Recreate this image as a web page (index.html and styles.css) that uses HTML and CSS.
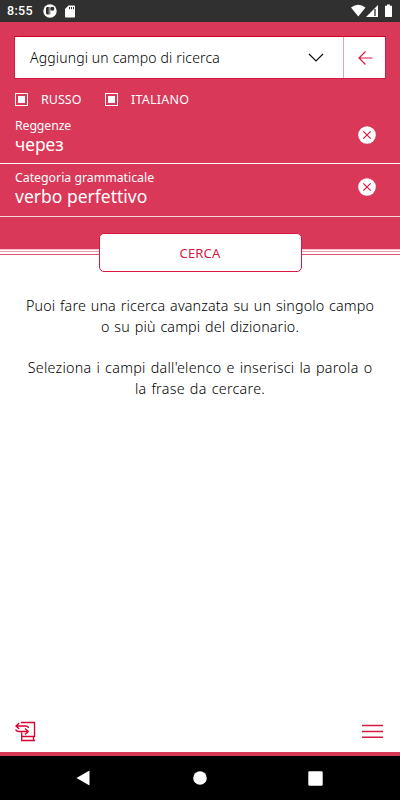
FILE: index.html
```html
<!DOCTYPE html>
<html lang="it">
<head>
<meta charset="utf-8">
<title>Ricerca avanzata</title>
<link rel="stylesheet" href="styles.css">
</head>
<body>
<div class="screen">
  <div class="status">
    <span class="clock">8:55</span>
    <svg class="app-dot" width="14" height="14" viewBox="0 0 14 14"><circle cx="7" cy="7" r="6.700" fill="#fff"/><path d="M3.900 3h1.900v7.500H4.500a1.500 1.500 0 0 1-1.500-1.500V4z" fill="#303030"/><path d="M6.800 3v7.500" stroke="#303030" stroke-width=".8"/><circle cx="9.300" cy="4.800" r="2" fill="#303030"/></svg>
    <svg class="sd" width="10" height="13" viewBox="0 0 10 13"><path d="M3.500.5H9a1 1 0 0 1 1 1v10a1 1 0 0 1-1 1H1a1 1 0 0 1-1-1V4z" fill="#fff"/><path d="M4.500 2v2.200M6.500 2v2.200M8.500 2v2.200" stroke="#303030"/></svg>
    <svg class="signals" width="43" height="14" viewBox="0 0 43 14"><path d="M0 3.500Q7-2 14.500 3.500L7.300 12.500z" fill="#fff"/><path d="M15 13L27 1v12z" fill="#fff"/><path d="M24 5v7" stroke="#303030" stroke-width="1.300"/><path d="M34 1.700h2V.5h3v1.200h2v10.800a.5.5 0 0 1-.5.5h-6a.5.5 0 0 1-.5-.5z" fill="#fff"/></svg>
  </div>
  <header class="search">
    <div class="picker">
      <div class="select"><span class="t-select">Aggiungi un campo di ricerca</span>
        <svg width="16" height="10" viewBox="0 0 16 10"><path d="M1 1l7 7 7-7" fill="none" stroke="#111" stroke-width="1.200"/></svg>
      </div>
      <div class="back"><svg width="15" height="14" viewBox="0 0 15 14"><path d="M14.500 7H1M7.500.5L1 7l6.500 6.500" fill="none" stroke="#d51b43" stroke-width="1.200"/></svg></div>
    </div>
    <div class="langs">
      <label><i class="box"></i><span class="t-ru">RUSSO</span></label>
      <label><i class="box"></i><span class="t-it">ITALIANO</span></label>
    </div>
    <div class="field first">
      <div><div class="name t-reg">Reggenze</div><div class="value t-che">через</div></div>
      <svg width="18" height="18" viewBox="0 0 18 18"><circle cx="9" cy="9" r="8.800" fill="#fff"/><path d="M5.300 5.300l7.400 7.400M12.700 5.300l-7.400 7.400" stroke="#d51b43" stroke-width="1.200"/></svg>
    </div>
    <div class="field second">
      <div><div class="name t-cat">Categoria grammaticale</div><div class="value t-ver">verbo perfettivo</div></div>
      <svg width="18" height="18" viewBox="0 0 18 18"><circle cx="9" cy="9" r="8.800" fill="#fff"/><path d="M5.300 5.300l7.400 7.400M12.700 5.300l-7.400 7.400" stroke="#d51b43" stroke-width="1.200"/></svg>
    </div>
  </header>
  <div class="lines"></div>
  <button class="go"><span class="t-go">CERCA</span></button>
  <main>
    <p><span class="l1">Puoi fare una ricerca avanzata su un singolo campo</span><br><span class="l2">o su più campi del dizionario.</span></p>
    <p><span class="l3">Seleziona i campi dall'elenco e inserisci la parola o</span><br><span class="l4">la frase da cercare.</span></p>
  </main>
  <footer>
    <svg width="21" height="21" viewBox="0 0 21 21" fill="none" stroke="#d8002f" stroke-width="1.300"><path d="M6 1.500h13.500v14H8q-1.300 0-1.300-1.500v-2.500M6.700 14v5.500H20M18.500 15.500v4M4.200 2L1 5l3.200 3M1 5h9.500q2.800 0 3 2M10 7.500l3.300 3-3.300 3M13.300 10.500H4Q1.200 10.500.7 8.500"/></svg>
    <svg width="21" height="15" viewBox="0 0 21 15"><path d="M0 1.500h21M0 7.500h21M0 13.300h21" stroke="#d51b43" stroke-width="1.600"/></svg>
  </footer>
  <nav>
    <svg width="14" height="16" viewBox="0 0 14 16"><path d="M13.500.5v15L.5 8z" fill="#fff"/></svg>
    <svg class="home" width="14" height="14" viewBox="0 0 14 14"><circle cx="7" cy="7" r="6.800" fill="#fff"/></svg>
    <svg width="15" height="15" viewBox="0 0 15 15"><rect x=".3" y=".3" width="14.400" height="14.400" rx="1.300" fill="#fff"/></svg>
  </nav>
</div>
</body>
</html>
```
FILE: styles.css
```css
* { box-sizing: border-box; }
body { margin: 0; }
.screen { width: 400px; height: 800px; display: flex; flex-direction: column; overflow: hidden; background: #fff; font-family: "Noto Sans", "Open Sans", sans-serif; font-weight: 300; }
.screen span, .name, .value { white-space: nowrap; }
svg { display: block; flex: none; }
.status { height: 22px; flex: none; background: #303030; display: flex; align-items: center; padding: 0 7px; }
.clock { font: 500 12.500px/22px Roboto, sans-serif; letter-spacing: .3px; color: #fff; width: 36px; }
.sd { margin-left: 8px; }
.signals { margin-left: auto; margin-right: -1px; }
.search { height: 227px; flex: none; background: #da3858; color: #fff; padding-top: 14px; }
.picker { height: 43px; margin: 0 14px; display: flex; background: #fff; border: 1px solid #d51b43; border-top-color: #d0001e; }
.select { flex: 1; display: flex; align-items: center; justify-content: space-between; padding: 0 19px 0 15px; color: #000; font-size: 14px; letter-spacing: .15px; }
.back { width: 42px; border-left: 1px solid #eaa0ae; display: flex; align-items: center; justify-content: center; padding-left: 1px; }
.langs { display: flex; height: 34px; padding: 4px 0 0 15px; font-size: 12.500px; font-weight: 400; }
.langs label { display: flex; align-items: center; height: 32px; width: 90px; }
.langs label + label { width: auto; }
.box { width: 13px; height: 13px; border: 1px solid #fff; display: flex; align-items: center; justify-content: center; margin-right: 13px; }
.box::before { content: ""; width: 7px; height: 7px; background: #fff; }
.field { display: flex; justify-content: space-between; padding: 0 24px 0 15px; border-bottom: 1px solid #fff; font-weight: 400; }
.first { height: 51px; padding-top: 4px; }
.second { height: 53px; padding-top: 5px; border-bottom-color: #f6d5dc; }
.field svg { margin-top: 9px; }
.name { font-size: 12.300px; line-height: 17px; }
.t-reg { letter-spacing: -.1px; }
.value { font-size: 17.500px; line-height: 20px; }
.lines { height: 6px; flex: none; border-bottom: 1px solid #e05570; border-top: 1px solid #f5c3cc; background: linear-gradient(#fff 0 1px, #eaa0ae 1px 2px, #fff 2px); }
.go { width: 203px; height: 39px; flex: none; margin: -22px 0 0 98.500px; z-index: 1; border: 1px solid #d51b43; border-radius: 5px; background: #fff; color: #d51b43; font: 400 13px "Noto Sans", sans-serif; padding: 0; }
.t-it { letter-spacing: .25px; }
.t-go { letter-spacing: .2px; }
main { flex: 1; padding-top: 23px; text-align: center; font-size: 14.300px; line-height: 21px; color: #000; word-spacing: 1px; }
.l3, .l4 { letter-spacing: .28px; }
.l1, .l2 { letter-spacing: .14px; }
main p { margin: 0 0 20px; }
footer { height: 45px; flex: none; border-bottom: 4px solid #da3858; padding: 0 17px 0 15px; display: flex; justify-content: space-between; align-items: center; }
nav { height: 44px; flex: none; background: #000; display: flex; align-items: center; justify-content: space-between; padding: 0 77px 0 76px; }
.home { margin-left: 2px; }
```
